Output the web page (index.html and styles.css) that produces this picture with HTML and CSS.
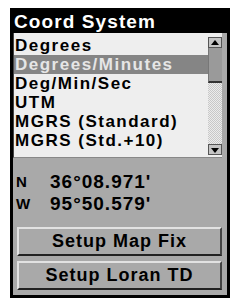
FILE: index.html
```html
<!DOCTYPE html>
<html lang="en">
<head>
  <meta charset="UTF-8" />
  <title>Coord System</title>
  <link rel="stylesheet" href="styles.css">
</head>
<body>
  <div class="panel">
    <div class="title">Coord System</div>

    <div class="list">
      <div class="items">
        <div class="item">Degrees</div>
        <div class="item sel">Degrees/Minutes</div>
        <div class="item">Deg/Min/Sec</div>
        <div class="item">UTM</div>
        <div class="item">MGRS (Standard)</div>
        <div class="item">MGRS (Std.+10)</div>
      </div>
      <div class="scroll">
        <div class="arrow up"></div>
        <div class="thumb"></div>
        <div class="track"></div>
        <div class="arrow down"></div>
      </div>
    </div>

    <div class="coords">
      <div class="row"><span class="lbl">N</span><span>36°08.971'</span></div>
      <div class="row"><span class="lbl">W</span><span>95°50.579'</span></div>
    </div>

    <div class="btn">Setup Map Fix</div>
    <div class="btn">Setup Loran TD</div>
  </div>
</body>
</html>
```

FILE: styles.css
```css
* {
  margin: 0;
  padding: 0;
  box-sizing: border-box;
}

body {
  background-color: #fff;
  font-family: "Liberation Sans", Arial, sans-serif;
  font-weight: bold;
}

.panel {
  margin: 8px 0 0 10px;
  width: 220px;
  height: 290px;
  background-color: #a9a9a9;
  border: 3px solid #000;
  display: flex;
  flex-direction: column;
}

.title {
  height: 22px;
  line-height: 22px;
  background-color: #000;
  color: #fff;
  font-size: 19px;
  letter-spacing: 1.1px;
  padding-left: 1px;
}

.list {
  display: flex;
  height: 125px;
  margin-right: 5px;
  background-color: #eeeeee;
  border-left: 1px solid #444;
  border-bottom: 1px solid #888;
}

.items {
  flex: 1;
  padding-top: 3px;
}

.item {
  height: 19px;
  line-height: 19px;
  font-size: 17px;
  letter-spacing: 1.5px;
  padding-left: 1px;
  color: #000;
  white-space: nowrap;
}

.item.sel {
  background-color: #858585;
  color: #e6e6e6;
}

.scroll {
  width: 14px;
  display: flex;
  flex-direction: column;
  padding: 4px 0 2px 0;
}

.arrow {
  height: 11px;
  background-color: #c4c4c4;
  border: 1px solid #555;
  position: relative;
}

.arrow::after {
  content: "";
  position: absolute;
  left: 2px;
  border-left: 4px solid transparent;
  border-right: 4px solid transparent;
}

.arrow.up::after {
  top: 2px;
  border-bottom: 5px solid #000;
}

.arrow.down::after {
  top: 3px;
  border-top: 5px solid #000;
}

.thumb {
  height: 35px;
  background-color: #9a9a9a;
  border-bottom: 2px solid #333;
  border-left: 1px solid #777;
}

.track {
  flex: 1;
  background: repeating-conic-gradient(#c8c8c8 0 25%, #ececec 0 50%) 0 0 / 2px 2px;
}

.coords {
  padding: 13px 0 0 3px;
  height: 69px;
}

.row {
  display: flex;
  height: 22px;
  line-height: 22px;
  font-size: 19px;
  letter-spacing: 1px;
}

.lbl {
  width: 34px;
  font-size: 15px;
}

.btn {
  margin: 0 5px 5px 4px;
  height: 29px;
  line-height: 25px;
  text-align: center;
  font-size: 18px;
  letter-spacing: 1px;
  background-color: #a9a9a9;
  border-top: 2px solid #e2e2e2;
  border-left: 2px solid #e2e2e2;
  border-bottom: 2px solid #222;
  border-right: 2px solid #444;
}
```
